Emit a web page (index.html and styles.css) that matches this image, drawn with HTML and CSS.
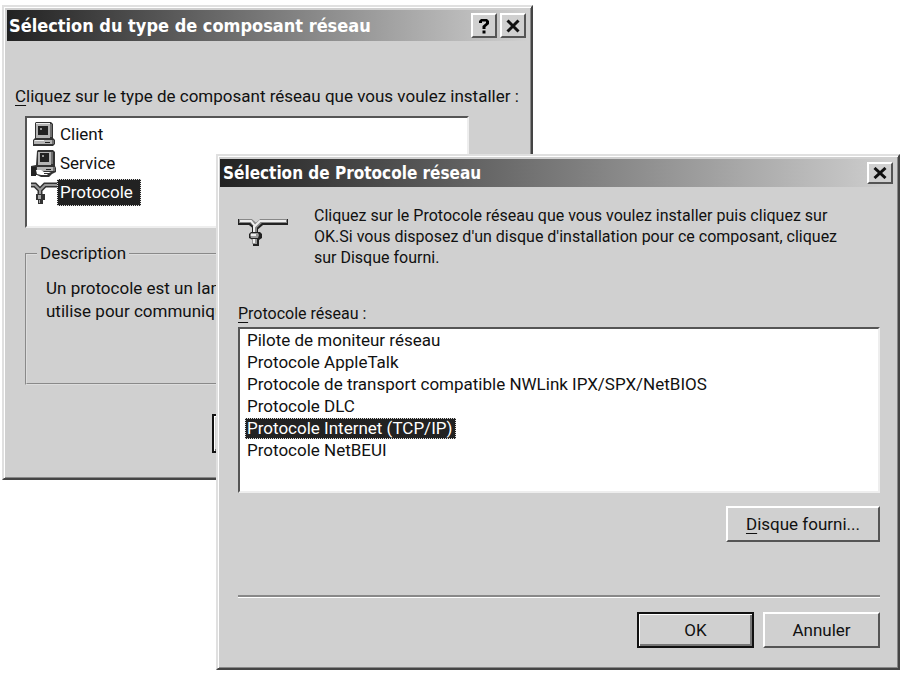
FILE: index.html
```html
<!DOCTYPE html>
<html lang="fr">
<head>
  <meta charset="UTF-8" />
  <meta name="viewport" content="width=device-width, initial-scale=1.0" />
  <title>Sélection de Protocole réseau</title>
  <link rel="stylesheet" href="styles.css">
</head>
<body>
  <!-- component type window, behind -->
  <section class="window window-type" aria-labelledby="type-title">
    <header class="titlebar">
      <h1 class="title" id="type-title">Sélection du type de composant réseau</h1>
      <button class="caption-btn" type="button" aria-label="Aide">
        <svg width="12" height="16" viewBox="0 0 12 16"><path d="M1 5V3l2-2h6l2 2v3L7.500 9V11h-3V8L8 5V3.500H4V5zM4.500 12.500h3V15.500h-3z"/></svg>
      </button>
      <button class="caption-btn" type="button" aria-label="Fermer">
        <svg width="14" height="14" viewBox="0 0 14 14"><path fill="none" stroke="#111" stroke-width="3" d="M1.500 1.500l11 11M12.500 1.500l-11 11"/></svg>
      </button>
    </header>
    <div class="type-body">
      <p class="label" id="type-label"><u>C</u>liquez sur le type de composant réseau que vous voulez installer :</p>
      <ul class="listbox type-list" role="listbox" aria-labelledby="type-label">
        <li role="option" aria-selected="false">
          <svg class="icon" width="26" height="26" viewBox="0 0 26 26">
            <path fill="#333" d="M4 1l1-1h15l2 2v14l2 2v4l-2 2H2v-6l2-2z"/>
            <path fill="#b4b4b4" d="M5 2h14v14H5zM3 18h18v4H3z"/>
            <path fill="#707070" d="M19 2h2v13h-2zM21 18h2v4h-2z"/>
            <path fill="#222" d="M7 4h10v9H7zM14 20h5v1h-5z"/>
            <path fill="#999" d="M9 6h2v2H9z"/>
            <path fill="#eee" d="M4 18h9v1H4zM5 1h14v1H5z"/>
          </svg>
          <span>Client</span>
        </li>
        <li role="option" aria-selected="false">
          <svg class="icon" width="26" height="28" viewBox="0 0 26 28">
            <path fill="#333" d="M6 1l1-1h15l2 2v14l1 2v4l-4 2-3 3h-8l-4-2H0v-9l5-1z"/>
            <path fill="#b4b4b4" d="M7 2h13v13H7zM6 17h17v4H6z"/>
            <path fill="#707070" d="M20 2h2v12h-2zM22 17h2v4h-2z"/>
            <path fill="#222" d="M9 3h9v9H9zM15 19h5v1h-5zM0 17h5v9H0z"/>
            <path fill="#999" d="M11 5h2v2h-2z"/>
            <path fill="#fff" d="M5 20h5l3 2h7l-2 1h-5v1h4l-1 1h-6l-4-1z"/>
          </svg>
          <span>Service</span>
        </li>
        <li role="option" aria-selected="true">
          <svg class="icon" width="26" height="24" viewBox="0 0 26 24">
            <path fill="none" stroke="#333" stroke-width="5" d="M0 4h4l5 5 5-5h12M9 8v6"/>
            <path fill="none" stroke="#999" stroke-width="2" d="M0 4h4l5 5 5-5h12M9 8v6"/>
            <path fill="#333" d="M5 13h9v6h-2v4H7v-4H5z"/>
            <path fill="#aaa" d="M7 14h3v4H7zM8 19h1v3H8z"/>
          </svg>
          <span class="selected">Protocole</span>
        </li>
      </ul>
      <fieldset class="description">
        <legend>Description</legend>
        <p>Un protocole est un langage<br>utilise pour communiquer</p>
      </fieldset>
      <div class="actions type-actions">
        <button class="btn btn-default" type="button" aria-label="Ajouter"></button>
        <button class="btn" type="button" aria-label="Annuler"></button>
      </div>
    </div>
  </section>

  <!-- protocol window, in front -->
  <section class="window window-protocol" aria-labelledby="protocol-title">
    <header class="titlebar">
      <h2 class="title" id="protocol-title">Sélection de Protocole réseau</h2>
      <button class="caption-btn" type="button" aria-label="Fermer">
        <svg width="14" height="12" viewBox="0 0 14 12"><path fill="none" stroke="#111" stroke-width="3" d="M1.500 1l11 10M12.500 1l-11 10"/></svg>
      </button>
    </header>
    <div class="protocol-body">
      <div class="intro">
        <svg class="intro-icon" width="52" height="30" viewBox="0 0 52 30">
          <path fill="none" stroke="#222" stroke-width="6" d="M0 5h12l6 5 6-5h26M17 9v8"/>
          <path fill="none" stroke="#888" stroke-width="4" d="M1 4h12l5 5 5-5h26M17 9v8"/>
          <path fill="none" stroke="#eee" stroke-width="2" d="M2 4h11l4 5 5-5h26M16 9v8"/>
          <path fill="#222" d="M13 15h9l2 2v4l-3 2v6h-6v-6l-4-2v-4z"/>
          <path fill="#999" d="M13 16h7l1 2-1 3h-7l-1-3zM14 22h5v5h-5z"/>
          <path fill="#eee" d="M13 17h5v2h-5zM15 22h2v4h-2z"/>
        </svg>
        <p>Cliquez sur le Protocole réseau que vous voulez installer puis cliquez sur<br>OK.Si vous disposez d'un disque d'installation pour ce composant, cliquez<br>sur Disque fourni.</p>
      </div>
      <p class="label" id="protocol-label"><u>P</u>rotocole réseau :</p>
      <ul class="listbox protocol-list" role="listbox" aria-labelledby="protocol-label">
        <li role="option" aria-selected="false"><span>Pilote de moniteur réseau</span></li>
        <li role="option" aria-selected="false"><span>Protocole AppleTalk</span></li>
        <li role="option" aria-selected="false"><span>Protocole de transport compatible NWLink IPX/SPX/NetBIOS</span></li>
        <li role="option" aria-selected="false"><span>Protocole DLC</span></li>
        <li role="option" aria-selected="true"><span class="selected">Protocole Internet (TCP/IP)</span></li>
        <li role="option" aria-selected="false"><span>Protocole NetBEUI</span></li>
      </ul>
      <div class="actions">
        <button class="btn btn-wide" type="button"><u>D</u>isque fourni...</button>
      </div>
      <hr class="rule">
      <div class="actions">
        <button class="btn btn-default" type="button">OK</button>
        <button class="btn" type="button">Annuler</button>
      </div>
    </div>
  </section>
</body>
</html>
```
FILE: styles.css
```css
* {
  box-sizing: border-box;
}

body {
  margin: 0;
  min-height: 100vh;
  background: #fff;
  color: #111;
  font-family: Roboto, sans-serif;
  font-size: 17px;
  line-height: 21px;
  overflow: hidden;
}

p, ul, h1, h2 {
  margin: 0;
  padding: 0;
}

u {
  text-underline-offset: 3px;
}

.window {
  position: absolute;
  padding: 3px;
  background: #d0d0d0;
  border: 2px solid;
  border-color: #e0e0e0 #444 #444 #e0e0e0;
  box-shadow: inset 1px 1px #fff, inset -1px -1px #888;
}

.window-type {
  top: 5px;
  left: 2px;
  width: 531px;
  line-height: 23px;
}

.window-protocol {
  top: 154px;
  left: 216px;
  right: 1px;
  padding: 3px 2px;
}

.titlebar {
  display: flex;
  align-items: center;
  gap: 3px;
  height: 28px;
  padding: 0 3px;
  background: linear-gradient(90deg, #222, #d0d0d0);
}

.window-type .titlebar {
  height: 31px;
  padding: 0 2px;
}

.title {
  flex: 1;
  color: #fff;
  font-family: "DejaVu Sans Condensed", "DejaVu Sans", sans-serif;
  font-size: 17px;
  font-weight: bold;
  white-space: nowrap;
}

.window-type .title {
  font-size: 18px;
}

.caption-btn {
  display: flex;
  align-items: center;
  justify-content: center;
  width: 26px;
  height: 22px;
  padding: 0;
  background: #d0d0d0;
  border: 2px solid;
  border-color: #fff #555 #555 #fff;
}

.window-type .caption-btn {
  height: 25px;
}

.label {
  white-space: nowrap;
}

.listbox {
  list-style: none;
  background: #fff;
  border: 2px solid;
  border-color: #555 #eee #eee #555;
}

.listbox li {
  display: flex;
  align-items: center;
  white-space: nowrap;
}

.selected {
  background: #222;
  color: #fff;
  outline: 1px dotted #ddd;
  outline-offset: -1px;
}

.type-body {
  padding: 44px 8px 22px;
}

.type-list {
  height: 112px;
  margin: 8px 51px 0 10px;
  padding: 2px 4px;
}

.type-list li {
  height: 29px;
}

.type-list span {
  padding: 2px 3px;
}

.type-list .selected {
  padding-right: 8px;
}

.icon {
  flex: none;
  width: 26px;
}

.description {
  height: 143px;
  margin: 14px 51px 0 10px;
  padding: 12px 19px;
  border: 2px groove #ddd;
  white-space: nowrap;
}

.description legend {
  margin-left: -9px;
  padding: 0 3px;
}

.actions {
  display: flex;
  justify-content: flex-end;
  gap: 9px;
}

.type-actions {
  margin-top: 29px;
  margin-right: 51px;
}

.btn {
  width: 117px;
  height: 36px;
  padding: 0;
  background: #d0d0d0;
  border: 2px solid;
  border-color: #fff #555 #555 #fff;
  color: inherit;
  font: inherit;
}

.btn-default {
  border-color: #111;
  box-shadow: inset 1px 1px #fff, inset -2px -2px #777;
}

.btn-wide {
  width: 154px;
}

.type-actions .btn {
  width: 124px;
  height: 39px;
}

.protocol-body {
  padding: 18px 16px 17px 18px;
}

.intro {
  display: flex;
  gap: 24px;
  font-size: 16px;
  white-space: nowrap;
}

.intro-icon {
  flex: none;
  margin-top: 12px;
}

.window-protocol .label {
  margin-top: 35px;
  font-size: 16px;
}

.protocol-list {
  height: 166px;
  margin: 3px 0 13px;
  padding: 0 5px;
}

.protocol-list li {
  height: 22px;
}

.protocol-list span {
  padding: 0 2px;
}

.protocol-list .selected {
  padding-right: 4px;
}

.rule {
  height: 3px;
  margin: 53px 0 14px;
  border: 0;
  border-top: 2px solid #888;
  background: #fff;
}
```
